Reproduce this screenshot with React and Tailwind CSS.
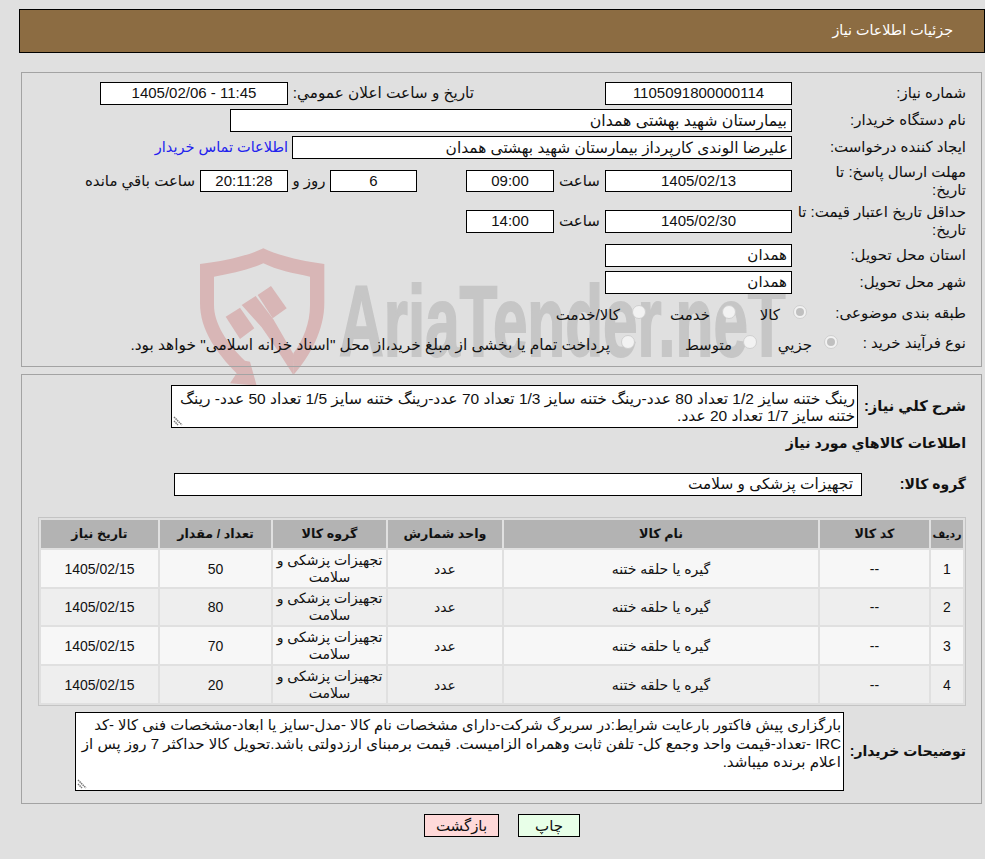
import React from "react";

const rows = [
  { id: "1", qty: "50", h: "h-[37px]" },
  { id: "2", qty: "80", h: "h-[36px]" },
  { id: "3", qty: "70", h: "h-[37px]" },
  { id: "4", qty: "20", h: "h-[37px]" },
];

const Box = ({ className = "", children }) => (
  <div className={`flex items-center justify-center border border-black bg-white whitespace-nowrap ${className}`}>
    {children}
  </div>
);

const TextBox = ({ className = "", children }) => (
  <div className={`flex items-center justify-start border border-black bg-white whitespace-nowrap ${className}`}>
    {children}
  </div>
);

const Radio = ({ checked }) => (
  <span className="mb-[3px] flex h-[14px] w-[14px] shrink-0 items-center justify-center rounded-full border border-[#cfcfcf] bg-[#f2f2f2]">
    {checked && <span className="h-[8px] w-[8px] rounded-full bg-[#c0c0c0]" />}
  </span>
);

const ResizeHandle = () => (
  <svg className="absolute bottom-[1px] left-[1px]" width="10" height="10" viewBox="0 0 10 10">
    <path d="M1 1 L9 9 M1 5 L5 9" stroke="#777" strokeWidth="1.5" strokeDasharray="1.5 0.7" fill="none" />
  </svg>
);

const Watermark = () => (
  <div className="absolute left-0 top-0 z-0 h-[859px] w-[985px] overflow-hidden">
    <svg className="absolute left-[190px] top-[240px]" width="200" height="150" viewBox="0 0 600 450">
      <g fill="#d8b6b6">
        <path d="M30 72 C110 62 170 48 220 25 C270 48 330 62 403 72 L403 190 C403 270 360 350 310 405 L310 340 C340 300 360 250 360 195 L360 110 C310 100 260 90 220 70 C175 90 125 100 72 110 L72 195 C72 250 110 310 165 362 L180 365 L200 437 L120 430 L140 400 C80 340 30 270 30 190 Z" />
        <path d="M107 230 L150 203 L193 265 L150 297 Z" />
        <path d="M155 195 L197 168 L250 238 L312 345 L310 405 L262 330 L215 262 Z" />
        <path d="M203 165 L243 138 L290 205 L248 235 Z" />
      </g>
    </svg>
    <span
      dir="ltr"
      className="absolute left-[339px] top-[266px] origin-left scale-x-[0.62] whitespace-nowrap font-['Liberation_Sans'] text-[100px] font-bold leading-[110px] text-[#c6c6c6] [-webkit-text-stroke:2px_#c6c6c6]"
    >
      AriaTender.neT
    </span>
  </div>
);

const App = () => {
  return (
    <div
      dir="rtl"
      className="relative h-[859px] w-[985px] overflow-hidden bg-[#e0e0e0] font-['Liberation_Sans','DejaVu_Sans',sans-serif] text-[15px] text-[#111]"
    >
      <Watermark />
      <div className="relative z-10 flex flex-col pl-[19px] pt-[9px]">
        <div className="flex h-[44px] w-[966px] items-center border border-black bg-[#8c6c42] pr-[31px] text-[14.3px] text-white">
          جزئیات اطلاعات نیاز
        </div>

        <div className="ml-[2px] mr-[3px] mt-[19px] h-[295px] border border-[#a3a3a3] pr-[15px] pt-[9px]">
          <div className="flex h-[23px] items-center">
            <div className="w-[174px]">شماره نیاز:</div>
            <Box className="h-[23px] w-[187px]">1105091800000114</Box>
            <div className="mr-[131px] w-[186px] whitespace-nowrap text-[15.3px]">تاریخ و ساعت اعلان عمومي:</div>
            <Box className="h-[23px] w-[188px]">11:45 - 1405/02/06</Box>
          </div>
          <div className="mt-[4px] flex h-[23px] items-center">
            <div className="w-[174px]">نام دستگاه خریدار:</div>
            <TextBox className="h-[23px] w-[562px] pr-[4px] text-[15.8px]">بیمارستان شهید بهشتی همدان</TextBox>
          </div>
          <div className="mt-[4px] flex h-[23px] items-center">
            <div className="w-[174px]">ایجاد کننده درخواست:</div>
            <TextBox className="h-[23px] w-[500px] pr-[3px] text-[15.4px]">علیرضا الوندی کارپرداز بیمارستان شهید بهشتی همدان</TextBox>
            <a href="#" className="mr-[4px] whitespace-nowrap text-[14.5px] text-[#2222ee]">اطلاعات تماس خریدار</a>
          </div>
          <div className="mt-[4px] flex h-[36px] items-center">
            <div className="w-[174px] pl-[20px] leading-[18px]">مهلت ارسال پاسخ: تا تاریخ:</div>
            <Box className="h-[22px] w-[187px]">1405/02/13</Box>
            <div className="w-[51px] text-center">ساعت</div>
            <Box className="h-[22px] w-[88px]">09:00</Box>
            <Box className="mr-[49px] h-[22px] w-[87px]">6</Box>
            <div className="w-[42px] whitespace-nowrap text-center">روز و</div>
            <Box className="h-[22px] w-[88px] bg-[#ffffe8]">20:11:28</Box>
            <div className="mr-[5px] whitespace-nowrap">ساعت باقي مانده</div>
          </div>
          <div className="mt-[4px] flex h-[36px] items-center">
            <div className="w-[174px] pl-[2px] leading-[18px]">حداقل تاریخ اعتبار قیمت: تا تاریخ:</div>
            <Box className="h-[23px] w-[187px]">1405/02/30</Box>
            <div className="w-[51px] text-center">ساعت</div>
            <Box className="h-[23px] w-[88px]">14:00</Box>
          </div>
          <div className="mt-[5px] flex h-[23px] items-center">
            <div className="w-[174px]">استان محل تحویل:</div>
            <TextBox className="h-[23px] w-[187px] pr-[4px]">همدان</TextBox>
          </div>
          <div className="mt-[4px] flex h-[23px] items-center">
            <div className="w-[174px]">شهر محل تحویل:</div>
            <TextBox className="h-[23px] w-[187px] pr-[4px]">همدان</TextBox>
          </div>
          <div className="mt-[7px] flex h-[24px] items-center">
            <div className="w-[159px] whitespace-nowrap">طبقه بندی موضوعی:</div>
            <div className="flex w-[71px] items-center">
              <Radio checked />
              <span className="mr-[13px] mt-[4px]">کالا</span>
            </div>
            <div className="flex w-[90px] items-center">
              <Radio />
              <span className="mr-[12px] mt-[4px]">خدمت</span>
            </div>
            <div className="flex items-center">
              <Radio />
              <span className="mr-[12px] mt-[4px]">کالا/خدمت</span>
            </div>
          </div>
          <div className="mt-[6px] flex h-[24px] items-center">
            <div className="w-[128px] whitespace-nowrap">نوع فرآیند خرید :</div>
            <div className="flex w-[81px] items-center">
              <Radio checked />
              <span className="mr-[12px] mt-[4px]">جزيي</span>
            </div>
            <div className="flex w-[122px] items-center">
              <Radio />
              <span className="mr-[11px] mt-[4px]">متوسط</span>
            </div>
            <div className="flex items-center">
              <Radio />
              <span className="mr-[11px] mt-[4px] whitespace-nowrap text-[15.4px]">
                پرداخت تمام یا بخشی از مبلغ خرید،از محل "اسناد خزانه اسلامی" خواهد بود.
              </span>
            </div>
          </div>
        </div>

        <div className="ml-[2px] mr-[3px] mt-[7px] h-[430px] border border-[#a3a3a3] pr-[15px] pt-[10px]">
          <div className="flex h-[43px] items-center">
            <div className="w-[108px] whitespace-nowrap text-[14.7px] font-bold">شرح کلي نیاز:</div>
            <div className="relative h-[43px] w-[687px] border border-black bg-white pr-[2px] pt-[4px] text-[15.5px] leading-[17px]">
              <div className="whitespace-nowrap">رینگ ختنه سایز 1/2 تعداد 80 عدد-رینگ ختنه سایز 1/3 تعداد 70 عدد-رینگ ختنه سایز 1/5 تعداد 50 عدد- رینگ</div>
              <div className="whitespace-nowrap">ختنه سایز 1/7 تعداد 20 عدد.</div>
              <ResizeHandle />
            </div>
          </div>
          <div className="mt-[5px] h-[20px] text-[14.2px] font-bold leading-[20px]">اطلاعات کالاهاي مورد نیاز</div>
          <div className="mt-[20px] flex h-[23px] items-center">
            <div className="w-[104px] text-[14px] font-bold">گروه کالا:</div>
            <TextBox className="h-[23px] w-[688px] pr-[8px] text-[15.3px]">تجهیزات پزشکی و سلامت</TextBox>
          </div>

          <table className="mt-[21px] w-[928px] table-fixed border-separate border-spacing-[2px] border border-[#c4c4c4] text-center text-[14px]">
            <colgroup>
              <col className="w-[32px]" />
              <col className="w-[109px]" />
              <col className="w-[314px]" />
              <col className="w-[114px]" />
              <col className="w-[113px]" />
              <col className="w-[111px]" />
              <col className="w-[117px]" />
            </colgroup>
            <thead>
              <tr className="h-[28px] bg-[#b3b3b3] text-[12.7px] font-bold">
                <th className="p-0 pt-[1px] text-[11px]">ردیف</th>
                <th className="p-0 pt-[1px]">کد کالا</th>
                <th className="p-0 pt-[1px]">نام کالا</th>
                <th className="p-0 pt-[1px]">واحد شمارش</th>
                <th className="p-0 pt-[1px]">گروه کالا</th>
                <th className="p-0 pt-[1px]">تعداد / مقدار</th>
                <th className="p-0 pt-[1px]">تاریخ نیاز</th>
              </tr>
            </thead>
            <tbody>
              {rows.map((row, i) => (
                <tr key={row.id} className={`${row.h} ${i % 2 === 0 ? "bg-[#f7f7f7]" : "bg-[#eeeeee]"}`}>
                  <td className="p-0 pt-[1px]">{row.id}</td>
                  <td className="p-0 pt-[1px]">--</td>
                  <td className="p-0 pt-[1px]">گیره یا حلقه ختنه</td>
                  <td className="p-0 pt-[1px]">عدد</td>
                  <td className="p-0 leading-[17px]">
                    <div>تجهیزات پزشکی و</div>
                    <div>سلامت</div>
                  </td>
                  <td className="p-0 pt-[1px]">{row.qty}</td>
                  <td className="p-0 pt-[1px]">1405/02/15</td>
                </tr>
              ))}
            </tbody>
          </table>

          <div className="mt-[6px] flex h-[79px] items-center">
            <div className="w-[122px] whitespace-nowrap text-[14px] font-bold">توضیحات خریدار:</div>
            <div className="relative h-[79px] w-[769px] border border-black bg-white pr-[2px] pt-[3px] leading-[18.67px]">
              <div className="whitespace-nowrap text-[14.8px]">بارگزاری پیش فاکتور بارعایت شرایط:در سربرگ شرکت-دارای مشخصات نام کالا -مدل-سایز یا ابعاد-مشخصات فنی کالا -کد</div>
              <div className="whitespace-nowrap">IRC -تعداد-قیمت واحد وجمع کل- تلفن ثابت وهمراه الزامیست. قیمت برمبنای ارزدولتی باشد.تحویل کالا حداکثر 7 روز پس از</div>
              <div className="whitespace-nowrap">اعلام برنده میباشد.</div>
              <ResizeHandle />
            </div>
          </div>
        </div>

        <div className="mt-[10px] flex justify-center gap-[19px]">
          <button className="h-[23px] w-[62px] border border-black bg-[#e8ffe8]">چاپ</button>
          <button className="h-[23px] w-[75px] border border-black bg-[#ffd9d9]">بازگشت</button>
        </div>
      </div>
    </div>
  );
};

export default App;
